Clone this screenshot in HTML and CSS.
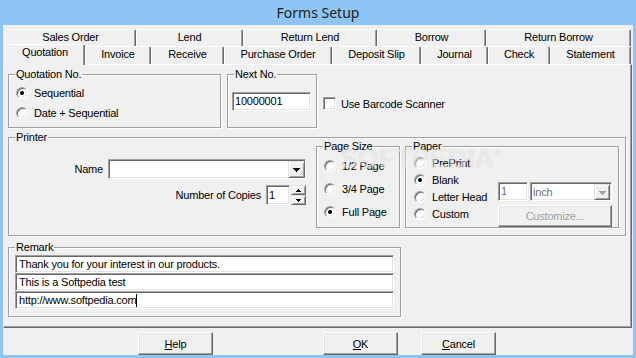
FILE: index.html
```html
<!DOCTYPE html>
<html>
<head>
<meta charset="utf-8">
<title>Forms Setup</title>
<link rel="stylesheet" href="styles.css">
</head>
<body>
<div class="window">
  <div class="titlebar">Forms Setup</div>
  <div class="client">
    <div class="tabrow back">
      <div class="tab">Sales Order</div>
      <div class="tab">Lend</div>
      <div class="tab">Return Lend</div>
      <div class="tab">Borrow</div>
      <div class="tab">Return Borrow</div>
    </div>
    <div class="tabrow front">
      <div class="tab sel">Quotation</div>
      <div class="tab">Invoice</div>
      <div class="tab">Receive</div>
      <div class="tab">Purchase Order</div>
      <div class="tab">Deposit Slip</div>
      <div class="tab">Journal</div>
      <div class="tab">Check</div>
      <div class="tab">Statement</div>
    </div>
    <div class="panel">
      <div class="row-a">
        <div class="group g-quote">
          <span class="legend">Quotation No.</span>
          <div class="radios">
            <div class="opt"><span class="radio on"></span>Sequential</div>
            <div class="opt"><span class="radio"></span>Date + Sequential</div>
          </div>
        </div>
        <div class="group g-next">
          <span class="legend">Next No.</span>
          <div class="edit w-next">10000001</div>
        </div>
        <div class="check-line"><span class="checkbox"></span>Use Barcode Scanner</div>
      </div>

      <div class="group g-printer">
        <span class="legend">Printer</span>
        <div class="pcol">
          <div class="field-row">
            <span>Name</span>
            <div class="edit combo w-name">
              <span class="dd-btn"><svg width="7" height="4" viewBox="0 0 7 4" shape-rendering="crispEdges"><rect x="0" y="0" width="7" height="1"/><rect x="1" y="1" width="5" height="1"/><rect x="2" y="2" width="3" height="1"/><rect x="3" y="3" width="1" height="1"/></svg></span>
            </div>
          </div>
          <div class="field-row">
            <span>Number of Copies</span>
            <div class="spin-wrap">
              <div class="edit w-copies">1</div>
              <div class="spin">
                <span class="sb"><svg width="5" height="3" viewBox="0 0 5 3" shape-rendering="crispEdges"><rect x="2" y="0" width="1" height="1"/><rect x="1" y="1" width="3" height="1"/><rect x="0" y="2" width="5" height="1"/></svg></span>
                <span class="sb"><svg width="5" height="3" viewBox="0 0 5 3" shape-rendering="crispEdges"><rect x="0" y="0" width="5" height="1"/><rect x="1" y="1" width="3" height="1"/><rect x="2" y="2" width="1" height="1"/></svg></span>
              </div>
            </div>
          </div>
        </div>
        <div class="group g-size">
          <span class="legend">Page Size</span>
          <div class="radios size-radios">
            <div class="opt"><span class="radio"></span>1/2 Page</div>
            <div class="opt"><span class="radio"></span>3/4 Page</div>
            <div class="opt"><span class="radio on"></span>Full Page</div>
          </div>
        </div>
        <div class="group g-paper">
          <span class="legend">Paper</span>
          <div class="radios paper-radios">
            <div class="opt"><span class="radio"></span>PrePrint</div>
            <div class="opt"><span class="radio on"></span>Blank</div>
            <div class="opt"><span class="radio"></span>Letter Head</div>
            <div class="opt"><span class="radio"></span>Custom</div>
          </div>
          <div class="paper-right">
            <div class="paper-top">
              <div class="edit disabled w-one">1</div>
              <div class="edit combo disabled w-unit">
                <span class="unit-text">inch</span>
                <span class="dd-btn off"><svg width="7" height="4" viewBox="0 0 7 4" shape-rendering="crispEdges"><rect x="0" y="0" width="7" height="1"/><rect x="1" y="1" width="5" height="1"/><rect x="2" y="2" width="3" height="1"/><rect x="3" y="3" width="1" height="1"/></svg></span>
              </div>
            </div>
            <div class="btn customize">Customize...</div>
          </div>
        </div>
      </div>

      <div class="group g-remark">
        <span class="legend">Remark</span>
        <div class="edit rfield">Thank you for your interest in our products.</div>
        <div class="edit rfield">This is a Softpedia test</div>
        <div class="edit rfield">http://www.softpedia.com<span class="caret"></span></div>
      </div>

      <div class="watermark">SOFTPEDIA<sup>®</sup></div>
    </div>
    <div class="buttons">
      <div class="btn b-help"><u>H</u>elp</div>
      <div class="btn b-ok"><u>O</u>K</div>
      <div class="btn b-cancel"><u>C</u>ancel</div>
    </div>
  </div>
</div>
</body>
</html>
```

FILE: styles.css
```css
* { box-sizing: border-box; }
html, body { margin: 0; padding: 0; }
body {
  width: 636px;
  height: 358px;
  overflow: hidden;
  background: #8ec5f4;
  font-family: "Liberation Sans", Arial, sans-serif;
  font-size: 11px;
  letter-spacing: -0.2px;
  color: #000;
}
.window {
  display: flex;
  flex-direction: column;
  height: 358px;
  padding: 0 3px 3px;
}
.titlebar {
  height: 25px;
  line-height: 25px;
  text-align: center;
  font-family: "Noto Sans", sans-serif;
  font-size: 14px;
  letter-spacing: 0;
  color: #222;
}
.client {
  flex: 1;
  background: #f0f0f0;
  display: flex;
  flex-direction: column;
  padding-top: 4px;
}

/* tabs */
.tabrow {
  display: grid;
  margin-left: 2px;
  width: 626px;
}
.tabrow.back {
  grid-template-columns: 131px 107px 134px 109px 145px;
  height: 17px;
}
.tabrow.front {
  grid-template-columns: 80px 66px 73px 108px 89px 67px 62px 81px;
  height: 18px;
  align-items: start;
}
.tab {
  height: 100%;
  background: #f0f0f0;
  border-top: 1px solid #fff;
  border-left: 1px solid #fff;
  border-right: 1px solid #696969;
  box-shadow: inset -1px 0 0 #a0a0a0;
  border-top-left-radius: 2px;
  border-top-right-radius: 2px;
  text-align: center;
  line-height: 15px;
  white-space: nowrap;
}
.tab.sel {
  height: 21px;
  margin-top: -2px;
  position: relative;
  z-index: 2;
}

/* panel */
.panel {
  position: relative;
  width: 629px;
  height: 264px;
  border: 1px solid;
  border-color: #fff #696969 #696969 #fff;
  box-shadow: inset -1px -1px 0 #a0a0a0;
  padding: 9px 0 0 4px;
  display: flex;
  flex-direction: column;
  align-items: flex-start;
}
.row-a {
  display: flex;
  align-items: flex-start;
  gap: 6px;
}
.group {
  position: relative;
  border: 1px solid #a0a0a0;
  box-shadow: inset 1px 1px 0 #fff, 1px 1px 0 #fff;
}
.legend {
  position: absolute;
  top: -7px;
  left: 6px;
  padding: 0 1px;
  background: #f0f0f0;
  line-height: 13px;
  white-space: nowrap;
}
.g-quote {
  width: 213px;
  height: 54px;
  padding: 11px 0 0 7px;
}
.radios {
  display: flex;
  flex-direction: column;
  gap: 6px;
}
.opt {
  display: flex;
  align-items: center;
  gap: 6px;
  height: 14px;
  white-space: nowrap;
}
.radio {
  position: relative;
  flex: none;
  width: 12px;
  height: 12px;
  border-radius: 50%;
  background: #fff;
  border: 1px solid;
  border-color: #a0a0a0 #fff #fff #a0a0a0;
  box-shadow: inset 1px 1px 0 #696969, inset -1px -1px 0 #e3e3e3;
}
.radio.on::after {
  content: "";
  position: absolute;
  left: 3px;
  top: 3px;
  width: 4px;
  height: 4px;
  border-radius: 50%;
  background: #000;
}
.g-next {
  width: 90px;
  height: 54px;
  padding: 17px 0 0 4px;
}
.edit {
  background: #fff;
  border: 1px solid;
  border-color: #a0a0a0 #fff #fff #a0a0a0;
  box-shadow: inset 1px 1px 0 #696969, inset -1px -1px 0 #e3e3e3;
  height: 19px;
  line-height: 17px;
  padding: 0 2px;
  white-space: nowrap;
  overflow: hidden;
}
.w-next { width: 79px; }
.check-line {
  display: flex;
  align-items: center;
  gap: 5px;
  margin-top: 23px;
  white-space: nowrap;
}
.checkbox {
  width: 13px;
  height: 13px;
  background: #fff;
  border: 1px solid;
  border-color: #a0a0a0 #fff #fff #a0a0a0;
  box-shadow: inset 1px 1px 0 #696969, inset -1px -1px 0 #e3e3e3;
}

/* printer */
.g-printer {
  width: 618px;
  height: 99px;
  margin-top: 9px;
  display: flex;
  align-items: flex-start;
  padding-top: 8px;
}
.pcol {
  width: 297px;
  display: flex;
  flex-direction: column;
  align-items: flex-end;
  gap: 6px;
  padding-top: 13px;
}
.field-row {
  display: flex;
  align-items: center;
  gap: 5px;
  height: 20px;
  white-space: nowrap;
}
.combo {
  display: flex;
  justify-content: flex-end;
  align-items: flex-start;
  height: 20px;
  padding: 1px 0 0;
}
.w-name { width: 198px; }
.dd-btn {
  width: 17px;
  height: 17px;
  display: flex;
  align-items: center;
  justify-content: center;
  padding-top: 1px;
  background: #f0f0f0;
  border: 1px solid;
  border-color: #e3e3e3 #696969 #696969 #e3e3e3;
  box-shadow: inset 1px 1px 0 #fff, inset -1px -1px 0 #a0a0a0;
}
.dd-btn svg { fill: #000; display: block; }
.dd-btn.off svg { fill: #a0a0a0; }
.spin-wrap {
  display: flex;
  gap: 1px;
}
.w-copies {
  width: 24px;
  height: 20px;
  line-height: 18px;
}
.spin {
  display: flex;
  flex-direction: column;
  width: 15px;
  height: 20px;
}
.sb {
  height: 10px;
  display: flex;
  align-items: center;
  justify-content: center;
  background: #f0f0f0;
  border: 1px solid;
  border-color: #e3e3e3 #696969 #696969 #e3e3e3;
  box-shadow: inset 1px 1px 0 #fff, inset -1px -1px 0 #a0a0a0;
}
.sb svg { fill: #000; display: block; }

.g-size {
  width: 84px;
  height: 82px;
  margin-left: 10px;
  padding: 12px 0 0 7px;
}
.size-radios { gap: 9px; }
.g-paper {
  width: 214px;
  height: 82px;
  margin-left: 5px;
  display: flex;
  justify-content: space-between;
  align-items: flex-start;
  padding: 9px 6px 0 8px;
}
.paper-radios { gap: 3px; }
.paper-right {
  margin-top: 26px;
  display: flex;
  flex-direction: column;
  gap: 4px;
}
.paper-top {
  display: flex;
  gap: 2px;
}
.disabled { color: #6d6d6d; }
.w-one { width: 30px; }
.w-unit {
  width: 82px;
  height: 19px;
  justify-content: space-between;
  padding: 1px 1px 0 2px;
}
.unit-text { line-height: 16px; }
.w-unit .dd-btn { width: 16px; height: 16px; }

.btn {
  display: flex;
  align-items: center;
  justify-content: center;
  background: #f0f0f0;
  border: 1px solid;
  border-color: #fff #696969 #696969 #fff;
  box-shadow: inset -1px -1px 0 #a0a0a0, inset 1px 1px 0 #e3e3e3;
  white-space: nowrap;
}
.customize {
  width: 114px;
  height: 22px;
  color: #a0a0a0;
}

/* remark */
.g-remark {
  width: 393px;
  height: 70px;
  margin-top: 11px;
  padding: 7px 0 0 6px;
}
.rfield {
  width: 379px;
  height: 18px;
  line-height: 16px;
  padding-left: 3px;
}
.caret {
  display: inline-block;
  width: 1px;
  height: 13px;
  background: #000;
  vertical-align: -3px;
}

.watermark {
  position: absolute;
  left: 336px;
  top: 73px;
  font-family: "Liberation Sans", Arial, sans-serif;
  font-weight: bold;
  font-size: 27px;
  line-height: 30px;
  letter-spacing: 0;
  color: rgba(255, 255, 255, 0.5);
  text-shadow: 0 0 1px rgba(0, 0, 0, 0.12);
  pointer-events: none;
  white-space: nowrap;
}
.watermark sup {
  font-size: 9px;
  vertical-align: 12px;
  font-weight: normal;
}

/* bottom buttons */
.buttons {
  display: flex;
  margin-top: 4px;
  padding-left: 135px;
}
.buttons .btn {
  width: 75px;
  height: 23px;
}
.b-ok { margin-left: 110px; }
.b-cancel { margin-left: 23px; }
```
